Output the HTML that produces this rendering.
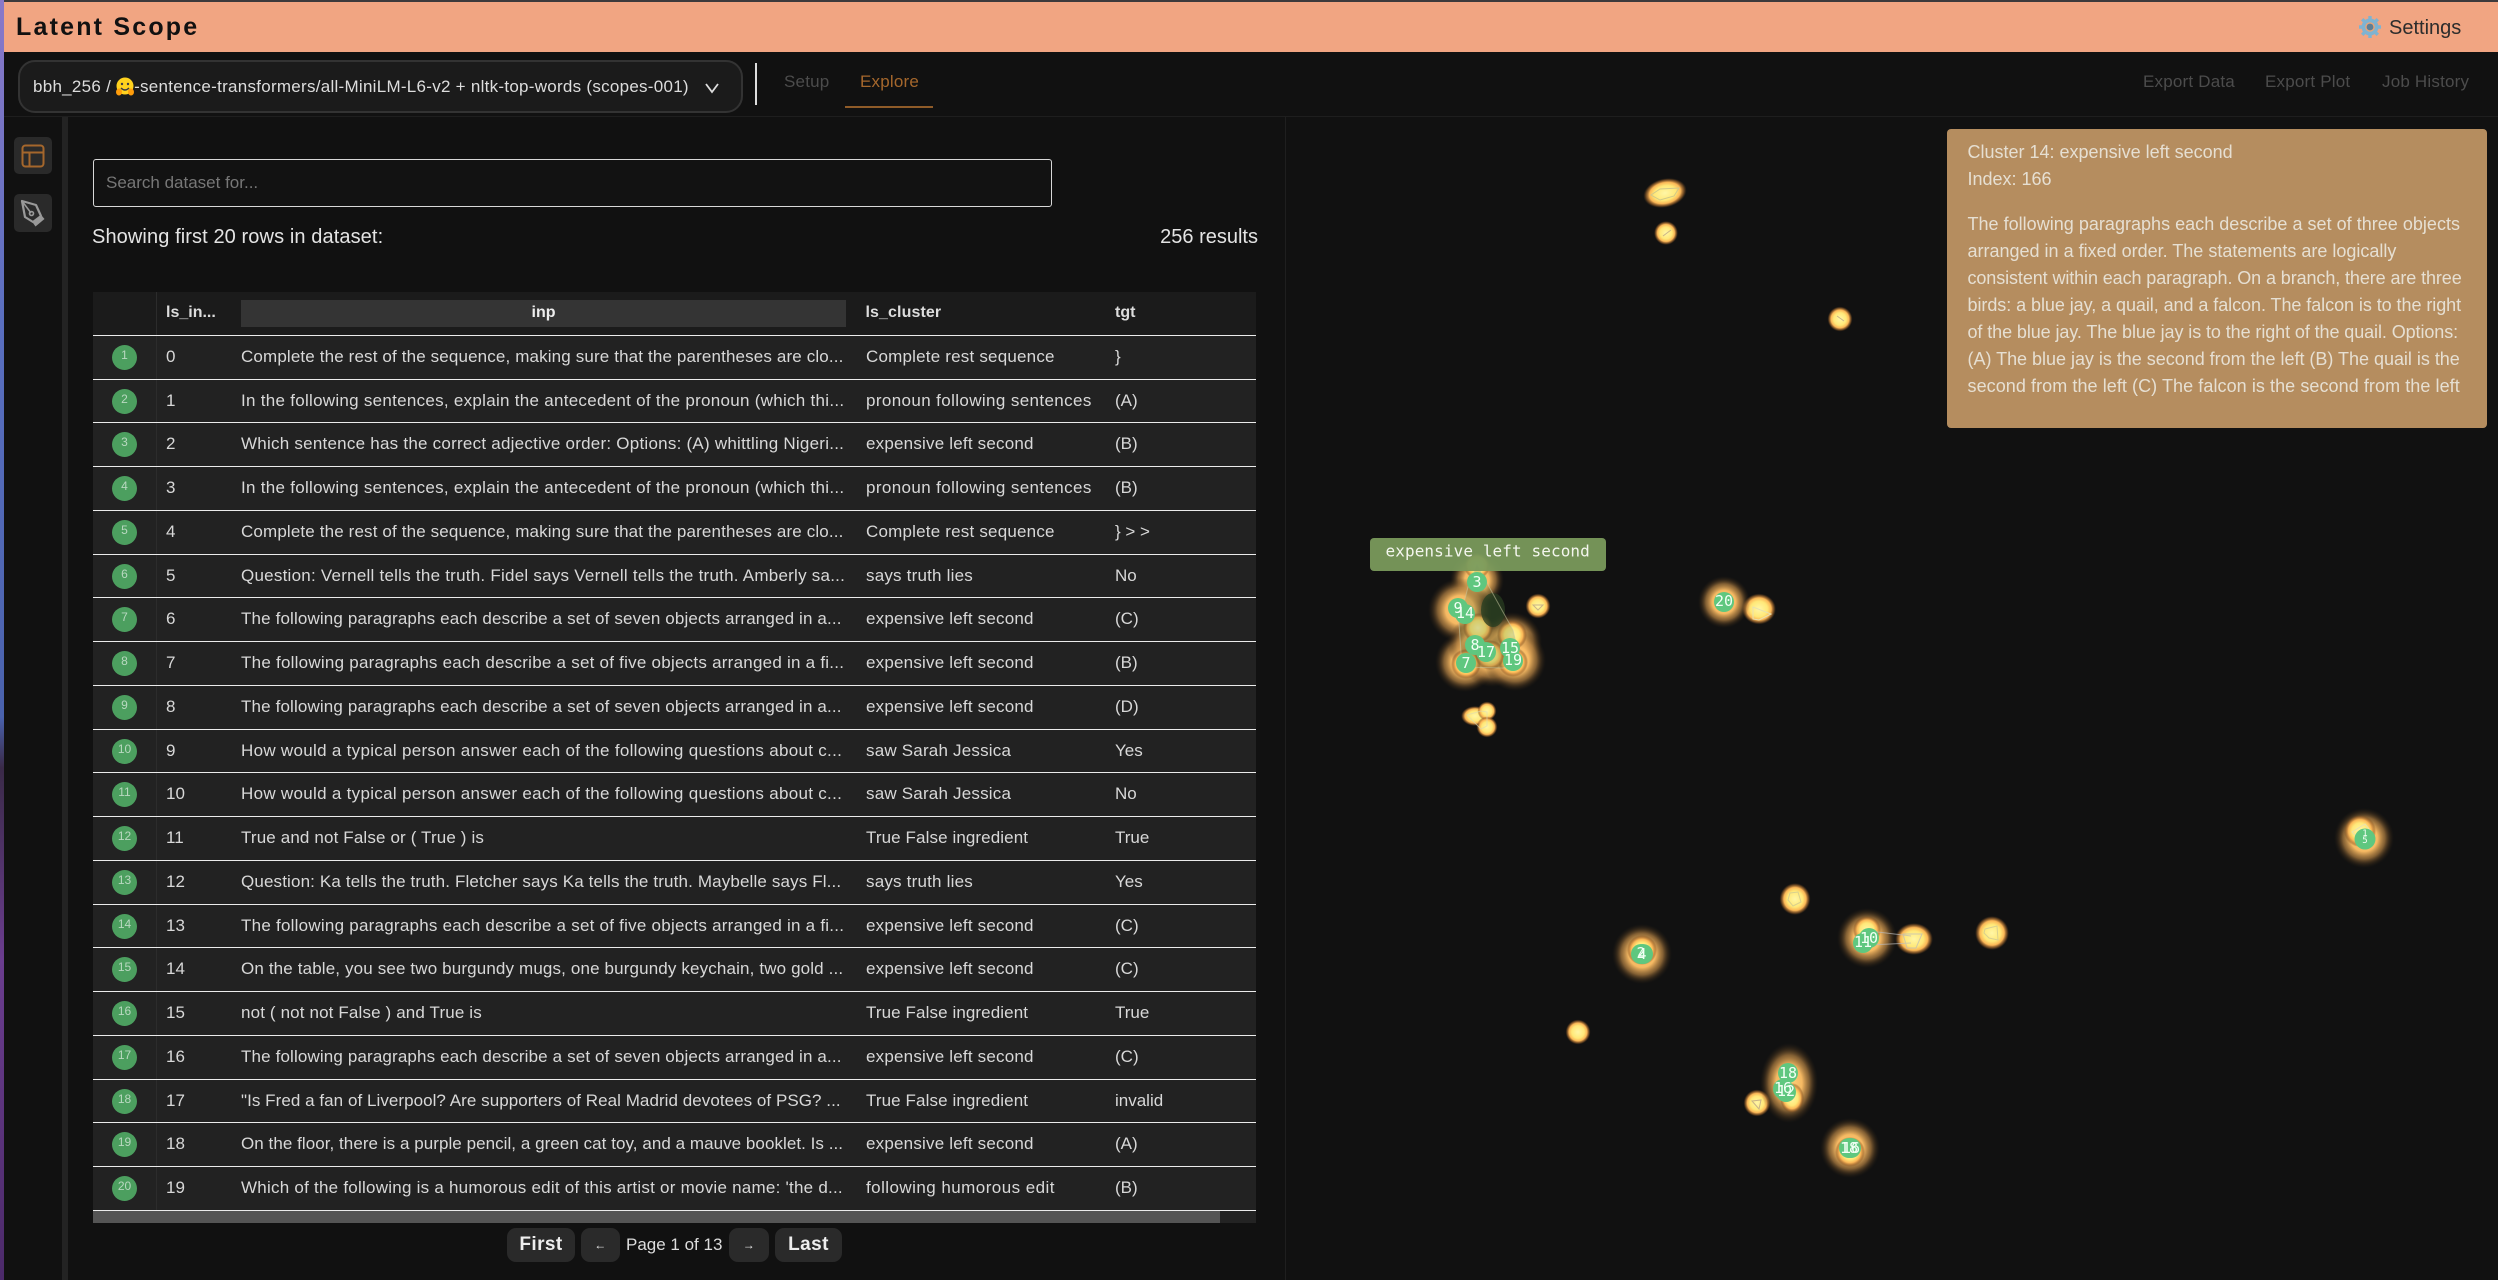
<!DOCTYPE html>
<html><head><meta charset="utf-8"><title>Latent Scope</title>
<style>
*{box-sizing:border-box}
html,body{margin:0;padding:0;background:#111;width:2498px;height:1280px;overflow:hidden;font-family:"Liberation Sans","Noto Sans CJK SC",sans-serif;color:#ddd}
.a{position:absolute;white-space:nowrap}
.row{position:absolute;left:93px;width:1163px;height:44px;background:#222;border-bottom:1px solid #ececec}
.row>span{position:absolute;top:10.5px;font-size:17px;line-height:20px;color:#d8d8d8;white-space:nowrap}
.row .c0{left:19px;top:9px;width:25px;height:25px;border-radius:50%;background:#4c9f5f;color:#b9d8c0;font-size:12px;line-height:21px;text-align:center}
.row .c1{left:73px}.row .c2{left:148px;letter-spacing:.14px}.row .c3{left:773px;letter-spacing:.2px}.row .c4{left:1022px}
.row .w1{letter-spacing:.28px}.row .w2{letter-spacing:.24px}.row .w3{letter-spacing:.3px}.row .w4{letter-spacing:.05px}
.row .p{letter-spacing:.38px}.row .f{letter-spacing:.45px}.row .t{letter-spacing:.1px}
.row i{position:absolute;left:63px;top:0;bottom:0;width:1px;background:#2c2c2c}
.s{height:43px}
.btn{position:absolute;top:1228px;height:34px;background:#2a2a2a;border-radius:9px;color:#eee;text-align:center;line-height:34px;font-size:19px;font-weight:bold;letter-spacing:.4px}
.nav{position:absolute;top:72px;font-size:17px;line-height:20px;color:#4c4c4c;white-space:nowrap;letter-spacing:.2px}
.card div{position:absolute;left:20.5px;font-size:18px;line-height:27px;color:#e6dfd2;white-space:nowrap}
text.n{font-family:"DejaVu Sans Mono",monospace;font-size:15px;fill:#f2fff5;text-anchor:middle}
</style></head><body>
<div class="a" style="left:0;top:0;width:4px;height:1280px;background:linear-gradient(180deg,#8a78c8 0,#5a6fc0 25%,#4a62ad 56%,#3a2a48 60%,#6b3d8f 75%,#4c2a6a 100%)"></div>
<div class="a" style="left:4px;top:0;right:0;height:2px;background:#3d3a3c"></div>
<div class="a" style="left:4px;top:2px;right:0;height:50px;background:#f1a582"></div>
<div class="a" style="left:16px;top:11px;font-size:25px;line-height:32px;font-weight:bold;color:#111;letter-spacing:2.2px">Latent Scope</div>
<svg class="a" style="left:2358px;top:15px" width="24" height="24" viewBox="0 0 24 24"><g fill="#7fb3d1"><circle cx="12" cy="12" r="8.5"/><g stroke="#7fb3d1" stroke-width="3.4"><path d="M12 1v22M1 12h22M4.2 4.2l15.6 15.6M19.8 4.2L4.2 19.8"/></g></g><circle cx="12" cy="12" r="4.8" fill="#e9a478"/><circle cx="12" cy="12" r="3.4" fill="#5d7f96"/></svg>
<div class="a" style="left:2389px;top:16px;font-size:20px;line-height:24px;color:#2c2c2c">Settings</div>

<div class="a" style="left:18px;top:60px;width:725px;height:53px;background:#1b1b1b;border:2px solid #333;border-radius:17px"></div>
<div class="a" style="left:33px;top:77px;font-size:17px;line-height:20px;color:#ddd;letter-spacing:.27px">bbh_256 / <svg width="20" height="19" viewBox="0 0 20 19" style="vertical-align:-4px;margin:0 -1px"><circle cx="10" cy="9" r="8.5" fill="#ffd21e"/><path d="M6 11q4 4 8 0" fill="none" stroke="#3a3b45" stroke-width="1.4"/><circle cx="7" cy="7" r="1.2" fill="#3a3b45"/><circle cx="13" cy="7" r="1.2" fill="#3a3b45"/><ellipse cx="4" cy="15" rx="3" ry="3.5" fill="#ff9d0b"/><ellipse cx="16" cy="15" rx="3" ry="3.5" fill="#ff9d0b"/></svg>-sentence-transformers/all-MiniLM-L6-v2 + nltk-top-words (scopes-001)</div>
<svg class="a" style="left:704px;top:82px" width="16" height="12" viewBox="0 0 16 12"><path d="M2 2l6 8 6-8" fill="none" stroke="#ddd" stroke-width="1.8"/></svg>
<div class="a" style="left:755px;top:63px;width:2px;height:42px;background:#ddd"></div>
<div class="nav" style="left:784px">Setup</div>
<div class="nav" style="left:860px;color:#a5672c">Explore</div>
<div class="a" style="left:845px;top:106px;width:88px;height:2px;background:#8f5b28"></div>
<div class="nav" style="left:2143px">Export Data</div>
<div class="nav" style="left:2265px">Export Plot</div>
<div class="nav" style="left:2382px">Job History</div>
<div class="a" style="left:4px;top:116px;right:0;height:1px;background:#1e1e1e"></div>

<div class="a" style="left:14px;top:137px;width:38px;height:37px;background:#2a2a2a;border-radius:5px"></div>
<div class="a" style="left:14px;top:194px;width:38px;height:38px;background:#2a2a2a;border-radius:5px"></div>
<svg class="a" style="left:20px;top:143px" width="26" height="26" viewBox="0 0 26 26"><rect x="2.5" y="2.5" width="21" height="21" rx="3" fill="none" stroke="#a5672c" stroke-width="2"/><path d="M2.5 9.5h21M9.5 9.5v14" fill="none" stroke="#a5672c" stroke-width="2"/></svg>
<svg class="a" style="left:19px;top:198px" width="28" height="30" viewBox="0 0 28 30"><path d="M3 3l14 4 5 11-8 6-8-5z" fill="none" stroke="#999" stroke-width="2.2" stroke-linejoin="round"/><path d="M3 3l9 12" stroke="#999" stroke-width="1.6"/><circle cx="12.5" cy="15.5" r="2" fill="none" stroke="#999" stroke-width="1.6"/><path d="M14 25l9-7 2.5 3-9 7.5z" fill="#999"/></svg>
<div class="a" style="left:62px;top:117px;width:6px;height:1163px;background:#232323"></div>
<div class="a" style="left:1285px;top:117px;width:1px;height:1163px;background:#1f1f1f"></div>

<div class="a" style="left:93px;top:159px;width:959px;height:48px;border:1.5px solid #d8d8d8;border-radius:3px;background:#121212"></div>
<div class="a" style="left:106px;top:173px;font-size:17px;line-height:20px;color:#777">Search dataset for...</div>
<div class="a" style="left:92px;top:225px;font-size:20px;line-height:24px;color:#e4e4e4;letter-spacing:.1px">Showing first 20 rows in dataset:</div>
<div class="a" style="right:1240px;top:225px;font-size:20px;line-height:24px;color:#e4e4e4">256 results</div>

<div class="a" style="left:93px;top:292px;width:1163px;height:44px;background:#1b1b1b;border-bottom:1px solid #ececec"></div>
<div class="a" style="left:156px;top:292px;width:1px;height:43px;background:#2c2c2c"></div>
<div class="a" style="left:241px;top:300px;width:605px;height:27px;background:#343434"></div>
<div class="a" style="left:166px;top:303px;font-size:16px;line-height:20px;font-weight:bold;color:#ddd">ls_in...</div>
<div class="a" style="left:241px;top:303px;width:605px;text-align:center;font-size:16px;line-height:20px;font-weight:bold;color:#eee">inp</div>
<div class="a" style="left:865.5px;top:303px;font-size:16px;line-height:20px;font-weight:bold;color:#ddd;letter-spacing:.1px">ls_cluster</div>
<div class="a" style="left:1115px;top:303px;font-size:16px;line-height:20px;font-weight:bold;color:#ddd">tgt</div>

<div class="row" style="top:336px"><i></i><span class="c0">1</span><span class="c1">0</span><span class="c2">Complete the rest of the sequence, making sure that the parentheses are clo...</span><span class="c3">Complete rest sequence</span><span class="c4">}</span></div>
<div class="row s" style="top:380px"><i></i><span class="c0">2</span><span class="c1">1</span><span class="c2 w1">In the following sentences, explain the antecedent of the pronoun (which thi...</span><span class="c3 p">pronoun following sentences</span><span class="c4">(A)</span></div>
<div class="row" style="top:423px"><i></i><span class="c0">3</span><span class="c1">2</span><span class="c2 w2">Which sentence has the correct adjective order: Options: (A) whittling Nigeri...</span><span class="c3">expensive left second</span><span class="c4">(B)</span></div>
<div class="row" style="top:467px"><i></i><span class="c0">4</span><span class="c1">3</span><span class="c2 w1">In the following sentences, explain the antecedent of the pronoun (which thi...</span><span class="c3 p">pronoun following sentences</span><span class="c4">(B)</span></div>
<div class="row" style="top:511px"><i></i><span class="c0">5</span><span class="c1">4</span><span class="c2">Complete the rest of the sequence, making sure that the parentheses are clo...</span><span class="c3">Complete rest sequence</span><span class="c4">} &gt; &gt;</span></div>
<div class="row s" style="top:555px"><i></i><span class="c0">6</span><span class="c1">5</span><span class="c2 w2">Question: Vernell tells the truth. Fidel says Vernell tells the truth. Amberly sa...</span><span class="c3">says truth lies</span><span class="c4">No</span></div>
<div class="row" style="top:598px"><i></i><span class="c0">7</span><span class="c1">6</span><span class="c2">The following paragraphs each describe a set of seven objects arranged in a...</span><span class="c3">expensive left second</span><span class="c4">(C)</span></div>
<div class="row" style="top:642px"><i></i><span class="c0">8</span><span class="c1">7</span><span class="c2 w2">The following paragraphs each describe a set of five objects arranged in a fi...</span><span class="c3">expensive left second</span><span class="c4">(B)</span></div>
<div class="row" style="top:686px"><i></i><span class="c0">9</span><span class="c1">8</span><span class="c2">The following paragraphs each describe a set of seven objects arranged in a...</span><span class="c3">expensive left second</span><span class="c4">(D)</span></div>
<div class="row s" style="top:730px"><i></i><span class="c0">10</span><span class="c1">9</span><span class="c2 w3">How would a typical person answer each of the following questions about c...</span><span class="c3">saw Sarah Jessica</span><span class="c4">Yes</span></div>
<div class="row" style="top:773px"><i></i><span class="c0">11</span><span class="c1">10</span><span class="c2 w3">How would a typical person answer each of the following questions about c...</span><span class="c3">saw Sarah Jessica</span><span class="c4">No</span></div>
<div class="row" style="top:817px"><i></i><span class="c0">12</span><span class="c1">11</span><span class="c2">True and not False or ( True ) is</span><span class="c3 t">True False ingredient</span><span class="c4">True</span></div>
<div class="row" style="top:861px"><i></i><span class="c0">13</span><span class="c1">12</span><span class="c2">Question: Ka tells the truth. Fletcher says Ka tells the truth. Maybelle says Fl...</span><span class="c3">says truth lies</span><span class="c4">Yes</span></div>
<div class="row s" style="top:905px"><i></i><span class="c0">14</span><span class="c1">13</span><span class="c2 w2">The following paragraphs each describe a set of five objects arranged in a fi...</span><span class="c3">expensive left second</span><span class="c4">(C)</span></div>
<div class="row" style="top:948px"><i></i><span class="c0">15</span><span class="c1">14</span><span class="c2">On the table, you see two burgundy mugs, one burgundy keychain, two gold ...</span><span class="c3">expensive left second</span><span class="c4">(C)</span></div>
<div class="row" style="top:992px"><i></i><span class="c0">16</span><span class="c1">15</span><span class="c2">not ( not not False ) and True is</span><span class="c3 t">True False ingredient</span><span class="c4">True</span></div>
<div class="row" style="top:1036px"><i></i><span class="c0">17</span><span class="c1">16</span><span class="c2">The following paragraphs each describe a set of seven objects arranged in a...</span><span class="c3">expensive left second</span><span class="c4">(C)</span></div>
<div class="row s" style="top:1080px"><i></i><span class="c0">18</span><span class="c1">17</span><span class="c2 w4">"Is Fred a fan of Liverpool? Are supporters of Real Madrid devotees of PSG? ...</span><span class="c3 t">True False ingredient</span><span class="c4">invalid</span></div>
<div class="row" style="top:1123px"><i></i><span class="c0">19</span><span class="c1">18</span><span class="c2 w4">On the floor, there is a purple pencil, a green cat toy, and a mauve booklet. Is ...</span><span class="c3">expensive left second</span><span class="c4">(A)</span></div>
<div class="row" style="top:1167px"><i></i><span class="c0">20</span><span class="c1">19</span><span class="c2 w2">Which of the following is a humorous edit of this artist or movie name: 'the d...</span><span class="c3 f">following humorous edit</span><span class="c4">(B)</span></div>

<div class="a" style="left:93px;top:1211px;width:1163px;height:12px;background:#232323"></div>
<div class="a" style="left:93px;top:1211px;width:1127px;height:12px;background:#555"></div>
<div class="btn" style="left:507px;width:68px">First</div>
<div class="btn" style="left:581px;width:39px;font-size:12px;font-weight:normal">←</div>
<div class="a" style="left:626px;top:1235px;font-size:17px;line-height:20px;color:#ddd">Page 1 of 13</div>
<div class="btn" style="left:729px;width:40px;font-size:12px;font-weight:normal">→</div>
<div class="btn" style="left:775px;width:67px">Last</div>

<svg class="a" style="left:0;top:0" width="2498" height="1280" viewBox="0 0 2498 1280">
<defs>
<radialGradient id="h"><stop offset="0" stop-color="#fff6a6"/><stop offset=".5" stop-color="#ffe878"/><stop offset=".72" stop-color="#fbb656"/><stop offset=".88" stop-color="#a5692d" stop-opacity=".6"/><stop offset="1" stop-color="#60401c" stop-opacity="0"/></radialGradient>
<radialGradient id="b"><stop offset="0" stop-color="#ffd67e"/><stop offset=".45" stop-color="#fabc64" stop-opacity=".98"/><stop offset=".7" stop-color="#c08a46" stop-opacity=".65"/><stop offset=".86" stop-color="#6e4d26" stop-opacity=".32"/><stop offset="1" stop-color="#3a2a16" stop-opacity="0"/></radialGradient>
</defs>
<ellipse cx="1665" cy="193" rx="22" ry="14.5" transform="rotate(-13 1665 193)" fill="url(#h)"/>
<circle cx="1666" cy="233" r="12" fill="url(#h)"/>
<circle cx="1840" cy="319" r="12.5" fill="url(#h)"/>
<circle cx="1538" cy="606" r="12.5" fill="url(#h)"/>
<ellipse cx="1759" cy="609" rx="17" ry="15.5" fill="url(#h)"/>
<circle cx="1578" cy="1032" r="12.5" fill="url(#h)"/>
<ellipse cx="1795" cy="899" rx="15.5" ry="16" fill="url(#h)"/>
<ellipse cx="1914" cy="939" rx="19" ry="16" fill="url(#h)"/>
<ellipse cx="1992" cy="933" rx="17" ry="17" fill="url(#h)"/>
<circle cx="1757" cy="1103" r="13.5" fill="url(#h)"/>
<ellipse cx="1475" cy="716" rx="14" ry="10" fill="url(#h)"/>
<circle cx="1487" cy="711" r="9.5" fill="url(#h)"/>
<circle cx="1487" cy="727" r="10.5" fill="url(#h)"/>
<circle cx="1642" cy="954" r="30" fill="url(#b)"/>
<circle cx="1642" cy="950" r="15" fill="url(#h)"/>
<circle cx="1867" cy="938" r="30" fill="url(#b)"/>
<circle cx="1867" cy="930" r="14" fill="url(#h)"/>
<ellipse cx="1789" cy="1083" rx="29" ry="40" fill="url(#b)"/>
<ellipse cx="1792" cy="1098" rx="12" ry="15" fill="url(#h)"/>
<circle cx="1850" cy="1148" r="30" fill="url(#b)"/>
<circle cx="1850" cy="1152" r="15" fill="url(#h)"/>
<circle cx="2364" cy="838" r="30" fill="url(#b)"/>
<circle cx="2360" cy="831" r="16" fill="url(#h)"/>
<circle cx="1724" cy="602" r="26" fill="url(#b)"/>
<circle cx="1477" cy="580" r="27" fill="url(#b)"/>
<circle cx="1460" cy="610" r="32" fill="url(#b)"/>
<circle cx="1465" cy="662" r="30" fill="url(#b)"/>
<circle cx="1478" cy="645" r="30" fill="url(#b)"/>
<circle cx="1492" cy="655" r="32" fill="url(#b)"/>
<circle cx="1512" cy="642" r="30" fill="url(#b)"/>
<circle cx="1515" cy="660" r="31" fill="url(#b)"/>
<circle cx="1478" cy="628" r="15" fill="url(#h)"/>
<circle cx="1512" cy="635" r="15" fill="url(#h)"/>
<circle cx="1477" cy="566" r="13" fill="url(#h)"/>
<circle cx="1466" cy="664" r="15" fill="url(#h)"/>
<circle cx="1513" cy="662" r="15" fill="url(#h)"/>
<circle cx="1490" cy="655" r="15" fill="url(#h)"/>
<ellipse cx="1493" cy="610" rx="12" ry="17" fill="#27391f" opacity=".8"/>
<path d="M1477 565L1513 630L1520 660L1503 668L1462 667L1459 623L1468 587Z" fill="#3d5a2c" fill-opacity=".2" stroke="#c8c8a0" stroke-opacity=".55" stroke-width="1"/>
<path d="M1679 188l-5 8-14 4-9-5 9-6z" fill="none" stroke="#cfc98a" stroke-width="1"/>
<path d="M1771 614l-12 6-6-1v-12z" fill="none" stroke="#e8e0b0" stroke-width="1"/>
<path d="M1663 236l8-6M1837 316l7 5M1533 605l10 0-5 5z" fill="none" stroke="#c9b488" stroke-width="1"/>
<path d="M1869 931l42 5M1869 945l42-2M1903 934l19 0-6 14-9 0z" fill="none" stroke="#bbb" stroke-opacity=".7" stroke-width="1"/>
<path d="M1790 893l8-1 3 10-8 4-5-6z" fill="none" stroke="#d8d090" stroke-width="1"/>
<path d="M1985 929l12-3 1 14-9-2-5-5z" fill="none" stroke="#d8d090" stroke-width="1"/>
<path d="M1752 1101l9-1-2 9z" fill="none" stroke="#c9b488" stroke-width="1"/>
<path d="M1467 715l14-4 6 1 0 14-6 3z" fill="none" stroke="#d8d8b8" stroke-opacity=".6" stroke-width="1"/>
<path d="M2352 832l13-8 5 6-12 8z" fill="none" stroke="#e8e0b0" stroke-width="1"/>
<rect x="1370" y="538" width="236" height="33" rx="4" fill="#7a9a5c" fill-opacity=".95"/>
<text x="1385.5" y="556.5" font-family="DejaVu Sans Mono,monospace" font-size="16" letter-spacing=".1" fill="#f4f6ee">expensive left second</text>
<g fill="#5fc77f">
<circle cx="1477" cy="582" r="10"/><circle cx="1458" cy="608" r="10"/><circle cx="1465" cy="614" r="10"/><circle cx="1475" cy="645" r="10"/><circle cx="1486" cy="652" r="10"/><circle cx="1510" cy="648" r="10"/><circle cx="1513" cy="661" r="10"/><circle cx="1466" cy="663" r="10"/><circle cx="1724" cy="602" r="10"/><circle cx="1641" cy="954" r="10"/><circle cx="1643" cy="954" r="10"/><circle cx="1869" cy="938" r="10"/><circle cx="1863" cy="943" r="10"/><circle cx="1788" cy="1073" r="10"/><circle cx="1783" cy="1089" r="10"/><circle cx="1786" cy="1092" r="10"/><circle cx="1849" cy="1148" r="10"/><circle cx="1851" cy="1148" r="10"/><circle cx="2365" cy="839" r="10.5"/>
</g>
<text class="n" x="1477" y="587">3</text><text class="n" x="1458" y="613">9</text><text class="n" x="1465" y="618">14</text><text class="n" x="1475" y="650">8</text><text class="n" x="1486" y="657">17</text><text class="n" x="1510" y="653">15</text><text class="n" x="1513" y="665">19</text><text class="n" x="1466" y="668">7</text><text class="n" x="1724" y="606">20</text>
<text class="n" x="1641" y="958">2</text><text class="n" x="1642" y="959">4</text><text class="n" x="1869" y="943">10</text><text class="n" x="1863" y="947">11</text><text class="n" x="1788" y="1078">18</text><text class="n" x="1783" y="1093">16</text><text class="n" x="1786" y="1096">12</text><text class="n" x="1849" y="1153">18</text><text class="n" x="1851" y="1153">16</text>
<text class="n" x="2365" y="836" style="font-size:9px">1</text><text class="n" x="2365" y="843" style="font-size:9px">5</text>
</svg>

<div class="a card" style="left:1947px;top:129px;width:540px;height:299px;background:#b58d5f;border-radius:4px">
<div style="top:9.5px">Cluster 14: expensive left second</div>
<div style="top:36.5px">Index: 166</div>
<div style="top:81.5px;letter-spacing:.02px">The following paragraphs each describe a set of three objects</div>
<div style="top:108.5px">arranged in a fixed order. The statements are logically</div>
<div style="top:135.5px;letter-spacing:-.1px">consistent within each paragraph. On a branch, there are three</div>
<div style="top:162.5px;letter-spacing:-.06px">birds: a blue jay, a quail, and a falcon. The falcon is to the right</div>
<div style="top:189.5px;letter-spacing:-.09px">of the blue jay. The blue jay is to the right of the quail. Options:</div>
<div style="top:216.5px;letter-spacing:-.02px">(A) The blue jay is the second from the left (B) The quail is the</div>
<div style="top:243.5px;letter-spacing:.07px">second from the left (C) The falcon is the second from the left</div>
</div>
</body></html>
